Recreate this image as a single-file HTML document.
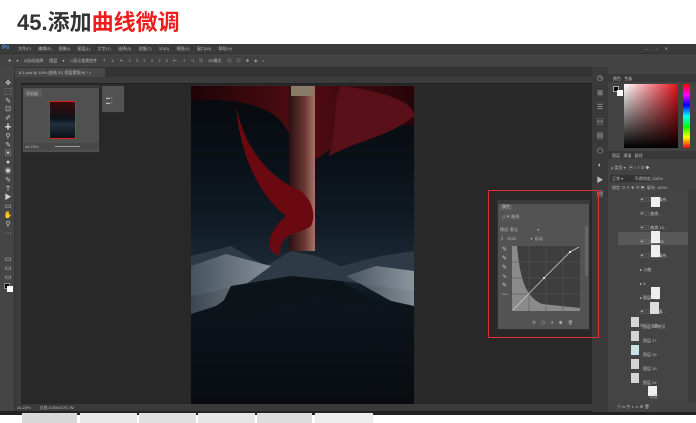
<!DOCTYPE html>
<html><head><meta charset="utf-8"><style>
*{margin:0;padding:0;box-sizing:border-box}
body{width:696px;height:423px;overflow:hidden;background:#fff;position:relative;font-family:"Liberation Sans","Noto Sans CJK SC",sans-serif}
.a{position:absolute}
.t{font-size:4px;color:#bbb;white-space:nowrap}
</style></head><body>
<div class="a" style="left:17px;top:5px;font-size:22px;font-weight:bold;color:#333;font-family:'Liberation Sans','Noto Sans CJK SC',sans-serif">45.添加<span style="color:#ee1c1c">曲线微调</span></div>

<div class="a" style="left:0;top:44px;width:696px;height:368px;background:#282828"></div>
<div class="a" style="left:0;top:44px;width:696px;height:9px;background:#3a3a3a"></div>
<div class="a t" style="left:2px;top:45px;color:#4a90d9;font-size:6px;font-weight:bold">Ps</div>
<div class="a t" style="left:18px;top:46px;word-spacing:6px">文件(F) 编辑(E) 图像(I) 图层(L) 文字(Y) 选择(S) 滤镜(T) 3D(D) 视图(V) 窗口(W) 帮助(H)</div>
<div class="a t" style="left:645px;top:46px;word-spacing:6px">— ▫ ✕</div>
<div class="a" style="left:0;top:53px;width:696px;height:14px;background:#424242;border-top:1px solid #333"></div>
<div class="a t" style="left:8px;top:58px;word-spacing:4px">✥ ▾ ☑自动选择: 图层 ▾ ☐显示变换控件  ⊤ ⊥ ⊢ ≡ ≡ ≡  ≡ ≡ ≡ ⊢ ⊣ ⊣  ▥  3D模式: ◎ ◎ ✥ ◈ ▪</div>
<div class="a" style="left:15px;top:67px;width:577px;height:10px;background:#333"></div>
<div class="a" style="left:15px;top:68px;width:90px;height:9px;background:#484848"></div>
<div class="a t" style="left:19px;top:70px">8.1.psd @ 44% (曲线 33, 图层蒙版/8) * ×</div>
<div class="a" style="left:20px;top:77px;width:572px;height:7px;background:#3c3c3c;border-bottom:1px solid #222"></div>
<div class="a" style="left:15px;top:77px;width:6px;height:327px;background:#3c3c3c"></div>
<div class="a" style="left:0;top:67px;width:15px;height:345px;background:#454545;border-right:1px solid #333"></div>
<div class="a" style="left:3px;top:80px;width:10px;height:212px;color:#ccc;font-size:7px;line-height:8.8px;text-align:center">✥<br>⬚<br>✎<br>⊡<br>✐<br>✚<br>⚲<br>✎<br>▣<br>●<br>◉<br>✎<br>T<br>▶<br>▭<br>✋<br>⚲<br>···<br>&nbsp;<br>&nbsp;<br>▭<br>▭<br>▭</div>
<div class="a" style="left:4px;top:283px;width:6px;height:6px;background:#000;border:1px solid #888"></div>
<div class="a" style="left:7px;top:286px;width:6px;height:6px;background:#fff"></div>

<div class="a" style="left:22px;top:85px;width:78px;height:68px;background:#505050;border:1px solid #2a2a2a"></div>
<div class="a" style="left:22px;top:85px;width:78px;height:3px;background:#383838"></div>
<div class="a" style="left:24px;top:89px;width:18px;height:8px;background:#5c5c5c"></div>
<div class="a t" style="left:26px;top:91px">导航器</div>
<div class="a" style="left:49px;top:101px;width:27px;height:38px;background:linear-gradient(#3a0a0e,#0c1218 45%,#223040 62%,#0a1016);border:1px solid #e02020"></div>
<div class="a" style="left:24px;top:143px;width:74px;height:7px;background:#484848"></div>
<div class="a t" style="left:25px;top:144px">44.23%</div>
<div class="a" style="left:55px;top:146px;width:25px;height:1px;background:#999"></div>
<div class="a" style="left:101px;top:85px;width:24px;height:28px;background:#525252;border:1px solid #2a2a2a"></div>
<div class="a t" style="left:106px;top:95px">▬ ▪<br>▬ ▪</div>

<!-- image -->
<div class="a" style="left:191px;top:86px;width:223px;height:318px;background:linear-gradient(180deg,#07090d 0%,#0a1118 25%,#111c26 45%,#1a2833 55%,#0d151c 68%,#080c11 100%);overflow:hidden">
<svg width="223" height="318" viewBox="0 0 223 318">
<defs><linearGradient id="r" x1="0" x2="1"><stop offset="0" stop-color="#200306"/><stop offset=".5" stop-color="#5a0c12"/><stop offset="1" stop-color="#2a0508"/></linearGradient>
<linearGradient id="s" x1="0" x2="1"><stop offset="0" stop-color="#2a1012"/><stop offset=".6" stop-color="#6a3834"/><stop offset="1" stop-color="#a87468"/></linearGradient>
<linearGradient id="i" x1="0" x2="1"><stop offset="0" stop-color="#505c68"/><stop offset="1" stop-color="#aab4bc"/></linearGradient></defs>
<path d="M0 0 H223 V40 C190 35 150 55 130 70 C110 85 105 55 90 35 C70 15 30 12 0 15Z" fill="url(#r)" opacity=".9"/>
<path d="M150 0 C190 5 223 15 223 30 C200 50 165 55 138 70 C148 40 140 20 150 0Z" fill="#5a1018"/>
<rect x="98" y="0" width="26" height="165" fill="url(#s)"/>
<rect x="100" y="0" width="22" height="10" fill="#8a7a68"/>
<path d="M45 20 C55 70 85 95 110 105 C122 115 125 130 120 140 C105 150 95 145 90 160 L88 170 L80 165 C75 150 85 140 95 130 C75 115 50 80 45 20Z" fill="#6a0a10"/>
<path d="M0 170 L40 160 L75 180 L100 165 L125 170 L150 180 L190 170 L223 165 V205 L150 195 L110 200 L70 195 L0 210Z" fill="#2e3a45"/>
<path d="M0 180 L35 168 L80 180 L25 220 L0 228Z" fill="url(#i)" opacity=".7"/>
<path d="M223 185 L185 180 L155 190 L200 215 L223 220Z" fill="url(#i)" opacity=".75"/>
<path d="M40 200 L100 190 L150 195 L190 220 L110 215 L20 240Z" fill="#0c1319"/>
</svg></div>
<div class="a" style="left:15px;top:404px;width:577px;height:7px;background:#3a3a3a"></div>
<div class="a t" style="left:17px;top:405px">44.23%&nbsp;&nbsp;&nbsp;&nbsp;&nbsp;&nbsp;&nbsp;&nbsp;文档:3.00M/376.7M</div>
<div class="a" style="left:0;top:411px;width:696px;height:4px;background:#222"></div>
<div class="a" style="left:22px;top:413px;width:55px;height:10px;background:#d8d8d8"></div>
<div class="a" style="left:80px;top:413px;width:57px;height:10px;background:#e8e8e8"></div>
<div class="a" style="left:139px;top:413px;width:57px;height:10px;background:#e0e0e0"></div>
<div class="a" style="left:198px;top:413px;width:57px;height:10px;background:#e6e6e6"></div>
<div class="a" style="left:257px;top:413px;width:55px;height:10px;background:#ddd"></div>
<div class="a" style="left:315px;top:413px;width:58px;height:10px;background:#eee"></div>

<div class="a" style="left:592px;top:67px;width:16px;height:345px;background:#3a3a3a"></div>
<div class="a" style="left:593px;top:72px;width:14px;height:130px;color:#bbb;font-size:7px;line-height:14.5px;text-align:center">◷<br>⊞<br>☰<br>▤<br>▦<br>⬡<br>◐<br>▶<br>▦</div>
<div class="a" style="left:608px;top:67px;width:88px;height:345px;background:#434343"></div>
<div class="a" style="left:608px;top:74px;width:88px;height:8px;background:#383838"></div>
<div class="a t" style="left:613px;top:76px">颜色&nbsp;&nbsp;&nbsp;色板</div>
<div class="a" style="left:613px;top:86px;width:6px;height:6px;background:#000;border:1px solid #aaa"></div>
<div class="a" style="left:617px;top:90px;width:6px;height:6px;background:#fff"></div>
<div class="a" style="left:624px;top:84px;width:54px;height:64px;background:linear-gradient(to bottom,transparent,#000),linear-gradient(to right,#fff,#e0101a)"></div>
<div class="a" style="left:683px;top:84px;width:7px;height:64px;background:linear-gradient(#f00,#f0f 17%,#00f 33%,#0ff 50%,#0f0 67%,#ff0 83%,#f00)"></div>
<div class="a" style="left:608px;top:151px;width:88px;height:8px;background:#383838"></div>
<div class="a t" style="left:612px;top:153px">图层&nbsp;&nbsp;&nbsp;通道&nbsp;&nbsp;&nbsp;路径</div>
<div class="a t" style="left:611px;top:165px">ρ 类型 ▾&nbsp;&nbsp;&nbsp;▣ ◐ T ⊡ ◆</div>
<div class="a" style="left:610px;top:175px;width:40px;height:7px;background:#333"></div>
<div class="a t" style="left:612px;top:176px">正常 ▾&nbsp;&nbsp;&nbsp;&nbsp;&nbsp;&nbsp;&nbsp;&nbsp;&nbsp;&nbsp;不透明度: 100%</div>
<div class="a t" style="left:612px;top:185px">锁定: ⊡ ✎ ✥ ▣ ⬒&nbsp;&nbsp;填充: 100%</div>
<div class="a" style="left:608px;top:190px;width:80px;height:212px;background:#444"></div>
<div class="a" style="left:618px;top:232px;width:72px;height:13px;background:#585858"></div>
<div class="a" style="left:640px;top:193px;width:48px;height:205px;font-size:4px;color:#ccc;line-height:14px">
<div>▣ ▢ 渐变填充...</div><div>▣ ▢ 曲线...</div><div>▣ ▢ 曲线 13...</div><div>▣ ▢ 曲线 33</div><div>▣ ▢ 渐变填充...</div><div>▸ 小曲</div><div>▸ 3</div><div>▸ 图层 +组</div><div>▣ ▢ 渐变填...</div><div>▣ ▢ 小曲</div></div>
<div class="a" style="left:651px;top:197px;width:9px;height:10px;background:#eee"></div>
<div class="a" style="left:651px;top:231px;width:9px;height:12px;background:#eee"></div>
<div class="a" style="left:651px;top:245px;width:9px;height:12px;background:#eee"></div>
<div class="a" style="left:651px;top:287px;width:9px;height:12px;background:#eee"></div>
<div class="a" style="left:650px;top:302px;width:9px;height:12px;background:#ddd"></div>
<div class="a" style="left:631px;top:317px;width:8px;height:10px;background:#d4d4d4"></div>
<div class="a" style="left:631px;top:331px;width:8px;height:10px;background:#d4d4d4"></div>
<div class="a" style="left:631px;top:345px;width:8px;height:10px;background:#c8e4e6"></div>
<div class="a" style="left:631px;top:359px;width:8px;height:10px;background:#d4d4d4"></div>
<div class="a" style="left:631px;top:373px;width:8px;height:10px;background:#d4d4d4"></div>
<div class="a" style="left:648px;top:386px;width:9px;height:10px;background:#eee"></div>
<div class="a t" style="left:643px;top:320px;line-height:14px">图层 39 拷贝<br>图层 37<br>图层 36<br>图层 35<br>图层 34<br>&nbsp;&nbsp;&nbsp;&nbsp;&nbsp;&nbsp;水用</div>
<div class="a t" style="left:617px;top:404px">ⓞ fx ▣ ◐ ▭ ⊞ 🗑</div>
<div class="a" style="left:688px;top:190px;width:8px;height:212px;background:#3c3c3c"></div>

<div class="a" style="left:497px;top:200px;width:93px;height:130px;background:#535353;border:1px solid #2e2e2e"></div>
<div class="a" style="left:497px;top:200px;width:93px;height:4px;background:#3a3a3a"></div>
<div class="a t" style="left:500px;top:204px;background:#5e5e5e;padding:0 2px">属性</div>
<div class="a t" style="left:501px;top:214px">⊿ ▣ 曲线</div>
<div class="a t" style="left:500px;top:227px">预设: 默认&nbsp;&nbsp;&nbsp;&nbsp;&nbsp;&nbsp;&nbsp;&nbsp;&nbsp;&nbsp;&nbsp;&nbsp;&nbsp;&nbsp;&nbsp;&nbsp;&nbsp;▾</div>
<div class="a t" style="left:500px;top:236px">☟&nbsp;&nbsp;&nbsp;RGB&nbsp;&nbsp;&nbsp;&nbsp;&nbsp;&nbsp;&nbsp;&nbsp;&nbsp;&nbsp;&nbsp;&nbsp;&nbsp;▾&nbsp;&nbsp;自动</div>
<div class="a" style="left:502px;top:246px;width:5px;height:60px;color:#ccc;font-size:6px;line-height:9px">✎<br>✎<br>✎<br>∿<br>✎<br>⁓</div>
<div class="a" style="left:512px;top:246px;width:68px;height:65px;background:#3e3e3e">
<svg width="68" height="65" viewBox="0 0 68 65">
<path d="M0 0 H5 C8 30 12 50 30 58 L68 62 V65 H0Z" fill="#8a8a8a"/>
<g stroke="#555" stroke-width=".5"><line x1="17" y1="0" x2="17" y2="65"/><line x1="34" y1="0" x2="34" y2="65"/><line x1="51" y1="0" x2="51" y2="65"/><line x1="0" y1="16" x2="68" y2="16"/><line x1="0" y1="32" x2="68" y2="32"/><line x1="0" y1="48" x2="68" y2="48"/></g>
<path d="M1 64 L32 32 L58 6 L67 1" stroke="#ccc" stroke-width=".8" fill="none"/>
<rect x="31" y="31" width="2" height="2" fill="#ddd"/><rect x="57" y="5" width="2" height="2" fill="#ddd"/>
</svg></div>
<div class="a" style="left:585px;top:226px;width:3px;height:50px;background:#666"></div>
<div class="a t" style="left:532px;top:320px;word-spacing:4px">▣ ◎ ↺ ◉ 🗑</div>
<div class="a" style="left:488px;top:190px;width:111px;height:148px;border:1.5px solid #e03030"></div>
</body></html>
